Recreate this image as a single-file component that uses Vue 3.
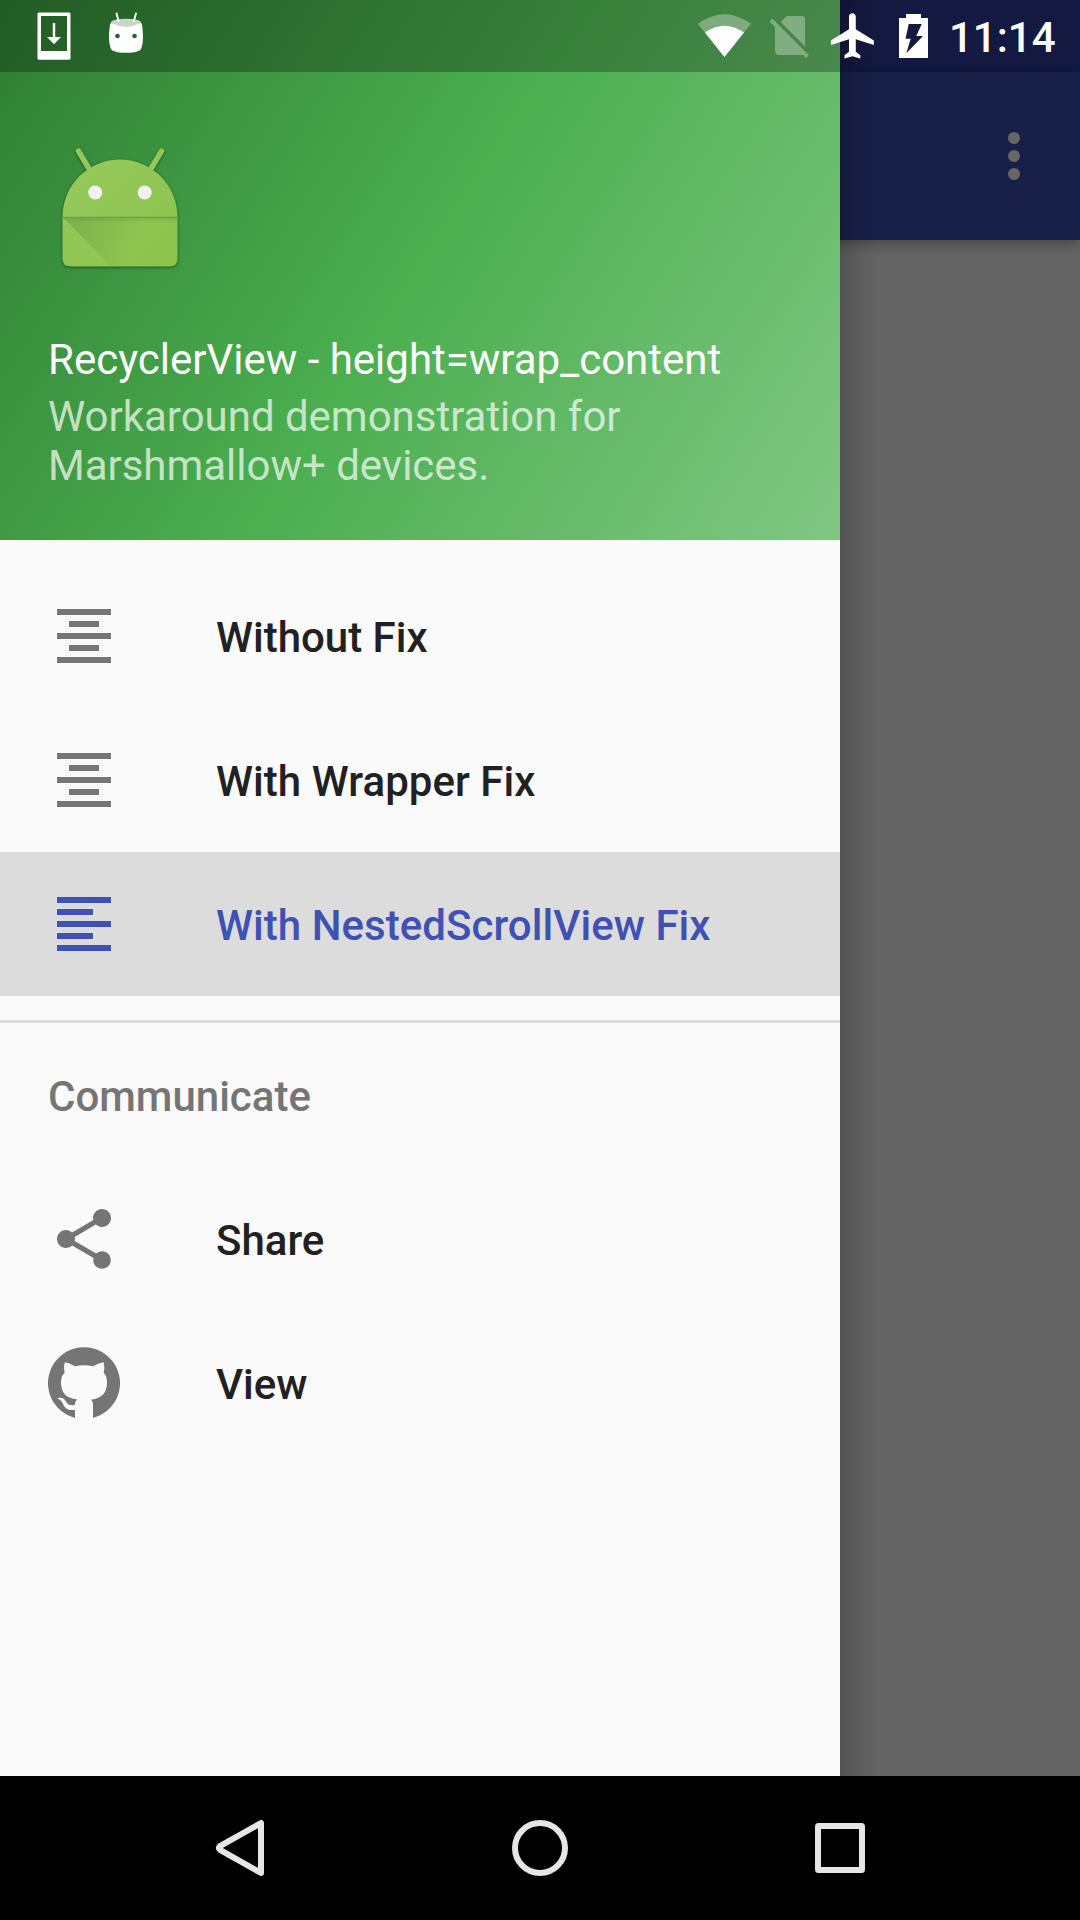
<script setup>
const CENTER = 'M3 3h18v2H3zM7 7h10v2H7zM3 11h18v2H3zM7 15h10v2H7zM3 19h18v2H3z'
const LEFT = 'M3 3h18v2H3zM3 7h12v2H3zM3 11h18v2H3zM3 15h12v2H3zM3 19h18v2H3z'
const SHARE =
  'M18 16.08c-.76 0-1.44.3-1.96.77L8.91 12.7c.05-.23.09-.46.09-.7s-.04-.47-.09-.7l7.05-4.11c.54.5 1.25.81 2.04.81 1.66 0 3-1.34 3-3s-1.34-3-3-3-3 1.34-3 3c0 .24.04.47.09.7L8.04 9.81C7.5 9.31 6.79 9 6 9c-1.66 0-3 1.34-3 3s1.34 3 3 3c.79 0 1.5-.31 2.04-.81l7.12 4.16c-.05.21-.08.43-.08.65 0 1.61 1.31 2.92 2.92 2.92s2.92-1.31 2.92-2.92-1.31-2.92-2.92-2.92z'
const GITHUB =
  'M81 211A108 108 0 1 1 135 211V171C135 163 133 159 129 156C163 152 177 135 177 104C177 91 174 82 167 75Q171 62 167 44Q153 46 135 56Q108 49 81 56Q63 46 51 44Q46 55 50 75C42 82 39 91 39 104C39 135 53 152 87 155Q82 161 80 172C57 175 58 164 50 156C44 150 38 149 30 151Q28 153 31 154C39 156 42 163 46 171C54 187 67 188 81 187Z'

const views = [
  { label: 'Without Fix', icon: CENTER },
  { label: 'With Wrapper Fix', icon: CENTER, wide: true },
  { label: 'With NestedScrollView Fix', icon: LEFT, active: true, wide: true },
]
const links = [
  { label: 'Share', icon: SHARE, box: '0 0 24 24' },
  { label: 'View', icon: GITHUB, box: '0 -2 216 216' },
]
</script>

<template>
  <div class="screen">
    <div class="app">
      <div class="status-bg"></div>
      <header class="toolbar">
        <svg class="more" width="12" height="48" viewBox="0 0 12 48">
          <circle cx="6" cy="6" r="6" /><circle cx="6" cy="24" r="6" /><circle cx="6" cy="42" r="6" />
        </svg>
      </header>
      <main class="content"></main>

      <aside class="drawer">
        <div class="head">
          <svg class="logo" width="144" height="144" viewBox="48 138 144 144">
            <defs>
              <linearGradient id="body" x1="0" y1="0" x2="1" y2="1">
                <stop offset="0" stop-color="#97ca5e" />
                <stop offset="1" stop-color="#8bc34a" />
              </linearGradient>
              <linearGradient id="fold" gradientUnits="userSpaceOnUse" x1="80" y1="225" x2="134" y2="246">
                <stop offset="0" stop-color="#33691e" stop-opacity=".2" />
                <stop offset="1" stop-color="#33691e" stop-opacity="0" />
              </linearGradient>
              <linearGradient id="edge" x1="0" y1="0" x2="0" y2="1">
                <stop offset="0" stop-color="#33691e" stop-opacity=".18" />
                <stop offset="1" stop-color="#33691e" stop-opacity="0" />
              </linearGradient>
            </defs>
            <g class="bot">
              <path class="antenna" d="M78.5 151.2L91 172M161.5 151.2L149 172" />
              <path fill="url(#body)" d="M62.5 217A57.5 57.5 0 0 1 177.5 217V258.5Q177.5 266.5 169.5 266.5H70.5Q62.5 266.5 62.5 258.5Z" />
            </g>
            <path fill="url(#fold)" d="M63 217.5H177V258L169 266H111.5Z" />
            <path fill="url(#edge)" d="M63 217.5H177V223H68.5Z" />
            <path class="crease" d="M62.5 217.3H177.5" />
            <circle cx="95.2" cy="192.5" r="7" fill="#f1f1f1" />
            <circle cx="144.7" cy="192.5" r="7" fill="#f1f1f1" />
          </svg>
          <div class="title">RecyclerView - height=wrap_content</div>
          <div class="subtitle">Workaround demonstration for Marshmallow+ devices.</div>
        </div>
        <nav class="menu">
          <div v-for="v in views" :key="v.label" class="item" :class="{ active: v.active, wide: v.wide }">
            <svg width="72" height="72" viewBox="0 0 24 24"><path :d="v.icon" /></svg>
            <span>{{ v.label }}</span>
          </div>
          <div class="divider"></div>
          <div class="subheader"><span>Communicate</span></div>
          <div v-for="l in links" :key="l.label" class="item">
            <svg width="72" height="72" :viewBox="l.box"><path :d="l.icon" /></svg>
            <span>{{ l.label }}</span>
          </div>
        </nav>
      </aside>

      <div class="status">
        <div class="scrim"></div>
        <svg class="notifications" width="160" height="72" viewBox="0 0 160 72" fill="#fff">
          <path fill-rule="evenodd" d="M38.5 12.5H69.5L70.5 13.5V58.7L69.5 59.7H38.5L37.5 58.7V13.5ZM41 16V51H67V16ZM52.8 23H55.2V37H61L54 44.3L47 37H52.8Z" />
          <path fill-rule="evenodd" d="M110.8 23Q126 30 141.2 23Q142.7 24 143 38Q142.5 48 140 50.3C135 53.7 117 53.7 112 50.3Q109.5 48 109 38Q109.3 24 110.8 23ZM117.5 33.7a2.3 2.3 0 1 0 .01 0ZM134.5 33.7a2.3 2.3 0 1 0 .01 0Z" />
          <ellipse cx="126" cy="22.7" rx="15" ry="4" opacity=".74" />
          <path d="M116.5 13.5L118.600 21M136 13.5L133.900 21" stroke="#fff" stroke-width="1.9" stroke-linecap="round" />
        </svg>
        <svg class="system" width="240" height="72" viewBox="690 0 240 72" fill="#fff">
          <path opacity=".32" d="M724.4 57L697.8 23.8Q724.4 4.5 751 23.8Z" />
          <path d="M724.4 57L705 32.6Q724.4 18.7 744 32.6Z" />
          <path opacity=".32" d="M780.7 22L786.7 16H801.5Q805 16 805 19.5V46.3ZM769.5 21.5L772.3 18.5L808.8 55.2L806 58L803.2 55H779Q775 55 775 51V27Z" />
          <path transform="translate(826.4 8.8) scale(2.26)" d="M21 16v-2l-8-5V3.5c0-.83-.67-1.5-1.5-1.5S10 2.67 10 3.5V9l-8 5v2l8-2.5V19l-2 1.5V22l3.5-1 3.5 1v-1.5L13 19v-5.5l8 2.5z" />
          <path fill-rule="evenodd" d="M906 14H921V18H928V58H899V18H906ZM908.7 24L905.5 38.7H910.7L906.3 53.3L923 36H916.3L921.7 24Z" />
        </svg>
        <span class="clock">11:14</span>
      </div>
    </div>

    <div class="navbar">
      <svg width="1080" height="144" viewBox="0 0 1080 144" fill="none" stroke="#e6e6e6" stroke-width="6" stroke-linejoin="round">
        <path d="M261 47V97L220 73.8Q217.6 72 220 70.2Z" />
        <circle cx="540" cy="72" r="25" />
        <rect x="818" y="50" width="44" height="44" rx=".5" />
      </svg>
    </div>
  </div>
</template>

<style>
body { margin: 0; background: #000; }
</style>

<style scoped>
.screen {
  width: 1080px;
  height: 1920px;
  display: flex;
  flex-direction: column;
  overflow: hidden;
  font-family: Roboto, "Noto Sans", sans-serif;
  font-size: 42px;
  line-height: 49px;
}
.app {
  position: relative;
  height: 1776px;
  display: flex;
  flex-direction: column;
  overflow: hidden;
}
.status-bg { height: 72px; background: #131940; }
.toolbar {
  position: relative;
  height: 168px;
  background: #192048;
  display: flex;
  align-items: center;
  justify-content: flex-end;
  padding-right: 60px;
  box-sizing: border-box;
  box-shadow: 0 4px 12px rgba(0, 0, 0, 0.3);
}
.more { fill: #666; }
.content { flex: 1; background: #646464; }
.drawer {
  position: absolute;
  inset: 0 auto 0 0;
  width: 840px;
  background: #fafafa;
}
.drawer::after {
  content: "";
  position: absolute;
  inset: 0 auto 0 100%;
  width: 38px;
  background: linear-gradient(90deg, rgba(0, 0, 0, 0.19), rgba(0, 0, 0, 0.07) 50%, transparent);
}
.head {
  height: 540px;
  box-sizing: border-box;
  padding: 138px 48px 0;
  background: linear-gradient(122.74deg, #2e7d32, #4caf50 50%, #81c784);
  color: #fff;
}
.logo { display: block; }
.bot { filter: drop-shadow(0 1.5px 1.5px rgba(0, 0, 0, 0.45)); }
.antenna { stroke: #93c856; stroke-width: 5.5; stroke-linecap: round; }
.crease { stroke: #689a3c; stroke-width: 1; }
.title { margin-top: 53px; }
.subtitle { margin-top: 8px; width: 640px; color: rgba(255, 255, 255, 0.7); letter-spacing: -0.02px; }
.menu { padding-top: 24px; font-weight: 500; color: #212121; }
.item {
  height: 144px;
  display: flex;
  align-items: center;
  gap: 96px;
  padding-left: 48px;
}
.item span, .subheader span { padding-top: 2px; }
.item.wide span { letter-spacing: 0.05px; }
.item svg { fill: #757575; }
.item.active { background: #dcdcdc; color: #3f51b5; }
.item.active svg { fill: #3f51b5; }
.divider { margin-top: 24px; height: 3px; background: #dcdcdc; }
.subheader {
  height: 144px;
  display: flex;
  align-items: center;
  padding-left: 48px;
  color: #757575;
}
.status {
  position: absolute;
  inset: 0 0 auto 0;
  height: 72px;
  display: flex;
  align-items: center;
}
.scrim {
  position: absolute;
  inset: 0 auto 0 0;
  width: 840px;
  background: rgba(0, 0, 0, 0.267);
}
.notifications, .system, .clock { position: relative; }
.system { margin-left: 530px; }
.clock { margin-left: 19px; padding-top: 2px; color: #fff; font-weight: 500; }
.navbar { height: 144px; background: #000; }
</style>
